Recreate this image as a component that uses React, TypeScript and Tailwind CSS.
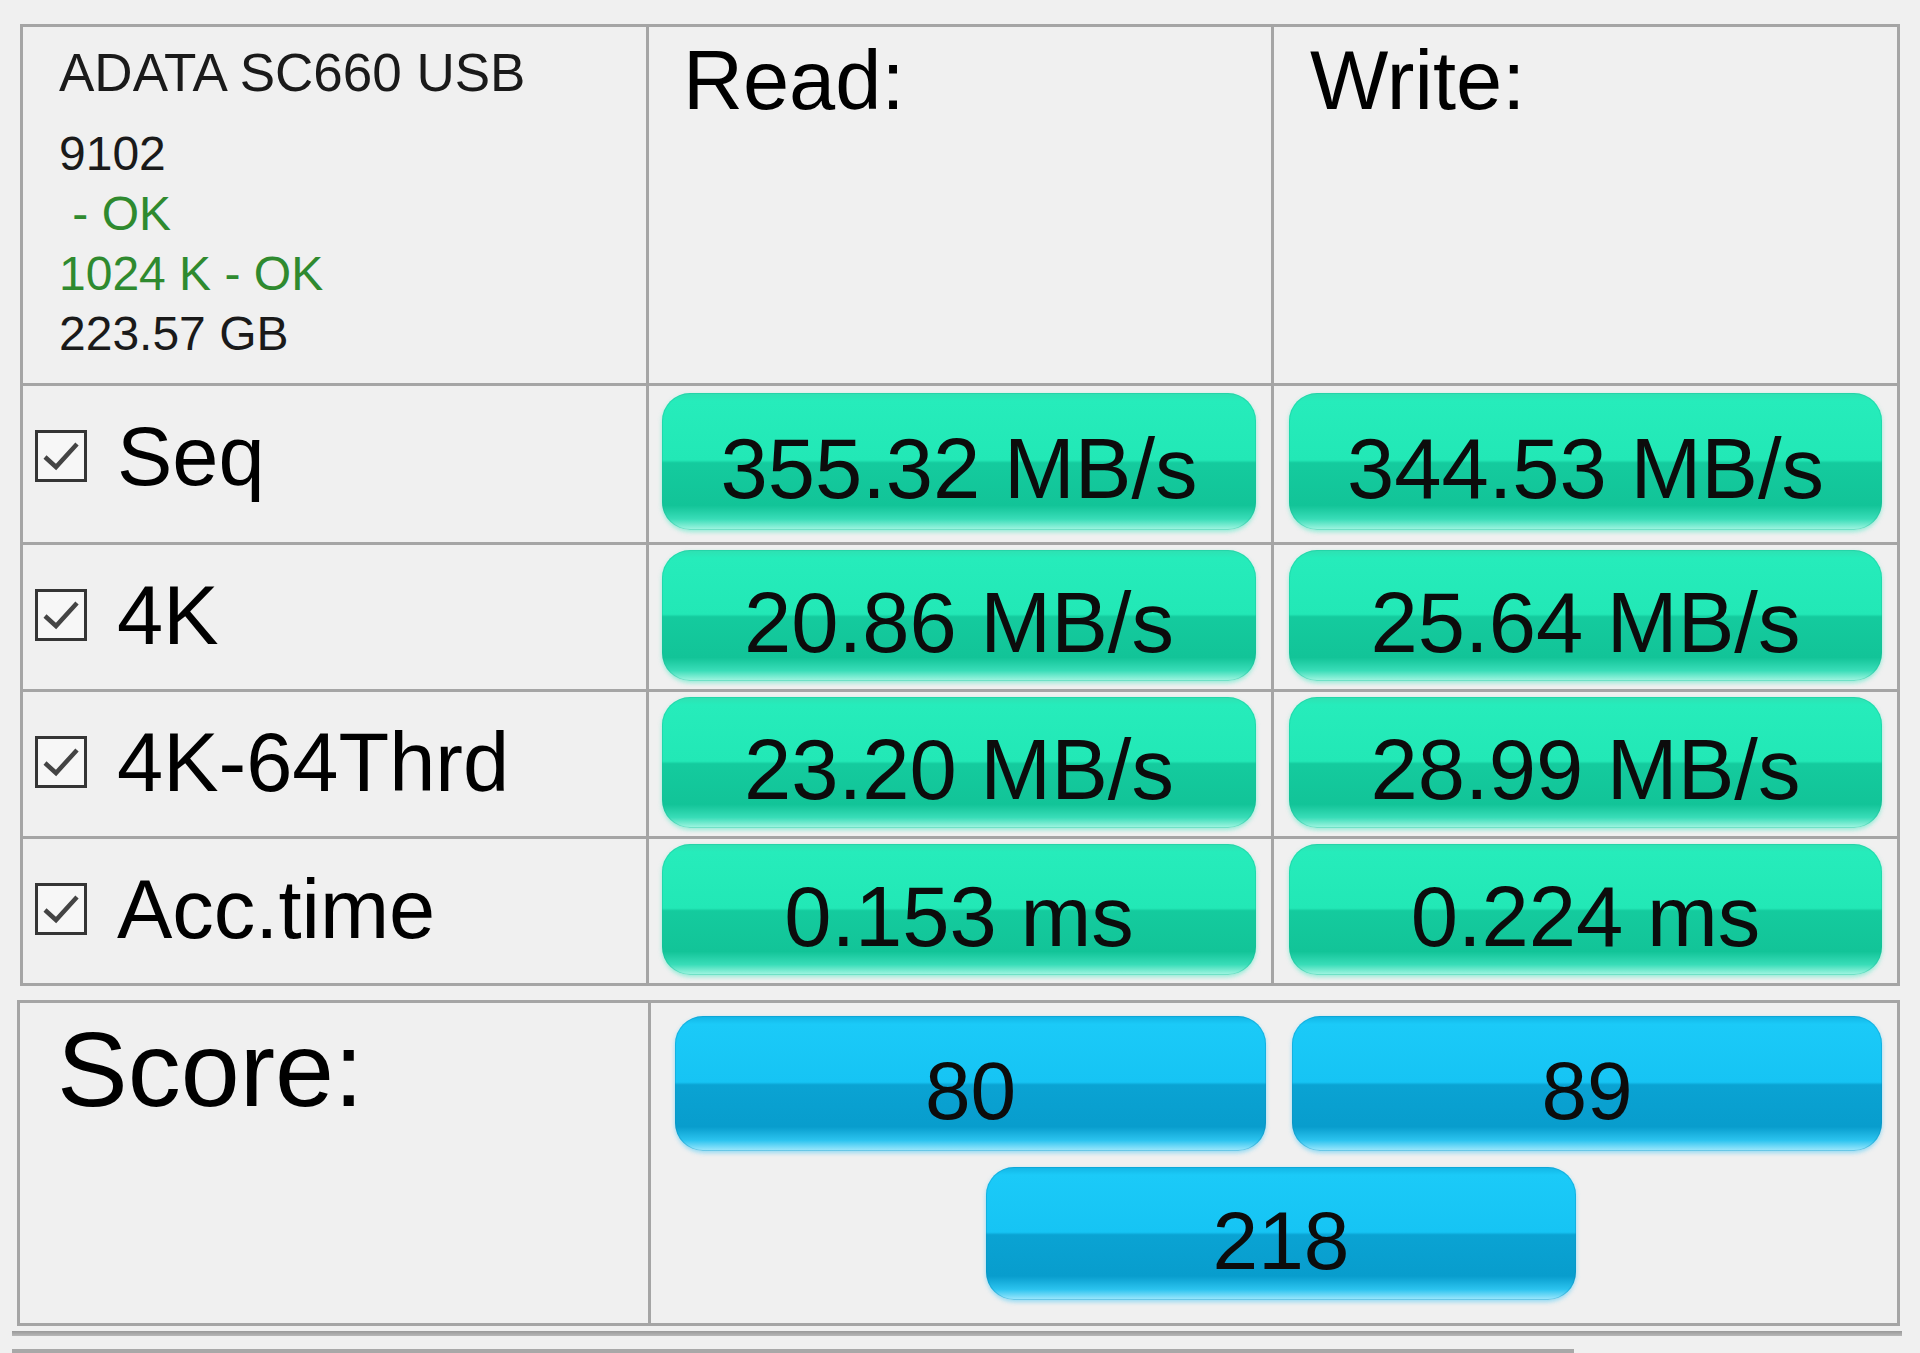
import React from "react";

const greenBar =
  "bg-[linear-gradient(180deg,#2fe0b2_0%,#26ecbb_6%,#22e8b6_49%,#14cb9e_51%,#12c498_82%,#39ddb8_92%,#a6f6e3_100%)] shadow-[inset_0_0_0_1px_rgba(20,190,150,0.35),0_2px_4px_rgba(110,235,205,0.7)]";
const blueBar =
  "bg-[linear-gradient(180deg,#12b4e4_0%,#1bcaf8_6%,#16c4f4_49%,#0aa3d3_51%,#089dcd_82%,#2bc3ef_92%,#a3e9fd_100%)] shadow-[inset_0_0_0_1px_rgba(10,140,190,0.35),0_2px_4px_rgba(110,210,245,0.7)]";

function Checkbox() {
  return (
    <div className="flex h-[52px] w-[52px] shrink-0 items-center justify-center border-[3px] border-[#353535] bg-[#f7f7f7]">
      <svg width="46" height="46" viewBox="0 0 46 46">
        <path d="M7 24 L18 34 L39 11" fill="none" stroke="#444444" strokeWidth="4.5" strokeLinejoin="miter" />
      </svg>
    </div>
  );
}

function ValueBar({ value, kind }: { value: string; kind: "green" | "blue" }) {
  return (
    <div
      className={`flex h-full w-full items-center justify-center rounded-[28px] leading-none text-[#0c0c0c] ${
        kind === "green" ? "text-[85px] " + greenBar : "text-[82px] " + blueBar
      }`}
    >
      <span className="pt-[14px]">{value}</span>
    </div>
  );
}

const rows = [
  { label: "Seq", read: "355.32 MB/s", write: "344.53 MB/s", tall: true },
  { label: "4K", read: "20.86 MB/s", write: "25.64 MB/s", tall: false },
  { label: "4K-64Thrd", read: "23.20 MB/s", write: "28.99 MB/s", tall: false },
  { label: "Acc.time", read: "0.153 ms", write: "0.224 ms", tall: false },
];

export default function App() {
  return (
    <div className="relative h-[1353px] w-[1920px] overflow-hidden bg-[#f0f0f0] font-['Liberation_Sans',Arial,sans-serif] text-black">
      {/* results table */}
      <div className="pl-[20px] pt-[24px]">
        <div className="grid w-[1880px] grid-cols-[623px_622px_623px] grid-rows-[356px_156px_144px_144px_144px] gap-[3px] border-[3px] border-[#a5a5a5] bg-[#a5a5a5]">
          <div className="bg-[#f0f0f0] pl-[36px] pt-[19px]">
            <div className="text-[53px] leading-none text-[#1a1a1a]">ADATA SC660 USB</div>
            <div className="mt-[25px] text-[48px] leading-[60px]">
              <div className="text-[#1a1a1a]">9102</div>
              <div className="whitespace-pre text-[#2f8a2f]"> - OK</div>
              <div className="text-[#2f8a2f]">1024 K - OK</div>
              <div className="text-[#1a1a1a]">223.57 GB</div>
            </div>
          </div>
          <div className="bg-[#f0f0f0] pl-[34px] pt-[12px] text-[83px] leading-none">Read:</div>
          <div className="bg-[#f0f0f0] pl-[36px] pt-[12px] text-[83px] leading-none">Write:</div>

          {rows.map((r) => (
            <React.Fragment key={r.label}>
              <div className={`flex items-center gap-[30px] bg-[#f0f0f0] pl-[12px] ${r.tall ? "pb-[16px]" : "pb-[4px]"}`}>
                <Checkbox />
                <span className="text-[83px] leading-none">{r.label}</span>
              </div>
              <div className={`bg-[#f0f0f0] pl-[13px] pr-[15px] ${r.tall ? "pt-[7px] pb-[12px]" : "pt-[5px] pb-[8px]"}`}>
                <ValueBar value={r.read} kind="green" />
              </div>
              <div className={`bg-[#f0f0f0] pl-[15px] pr-[15px] ${r.tall ? "pt-[7px] pb-[12px]" : "pt-[5px] pb-[8px]"}`}>
                <ValueBar value={r.write} kind="green" />
              </div>
            </React.Fragment>
          ))}
        </div>
      </div>

      {/* score panel */}
      <div className="pl-[17px] pt-[14px]">
        <div className="grid w-[1883px] grid-cols-[628px_1246px] grid-rows-[320px] gap-[3px] border-[3px] border-[#a5a5a5] bg-[#a5a5a5]">
          <div className="bg-[#f0f0f0] pl-[37px] pt-[13px] text-[106px] leading-none">Score:</div>
          <div className="flex flex-col bg-[#f0f0f0] pl-[24px] pt-[13px]">
            <div className="flex h-[135px] gap-[26px]">
              <div className="w-[591px]">
                <ValueBar value="80" kind="blue" />
              </div>
              <div className="w-[590px]">
                <ValueBar value="89" kind="blue" />
              </div>
            </div>
            <div className="ml-[311px] mt-[16px] h-[133px] w-[590px]">
              <ValueBar value="218" kind="blue" />
            </div>
          </div>
        </div>
      </div>

      <div className="ml-[12px] mt-[5px] h-[5px] w-[1890px] bg-[linear-gradient(180deg,#9a9a9a,#b8b8b8)]" />
      <div className="ml-[12px] mt-[13px] h-[4px] w-[1562px] bg-[#a8a8a8]" />
    </div>
  );
}
